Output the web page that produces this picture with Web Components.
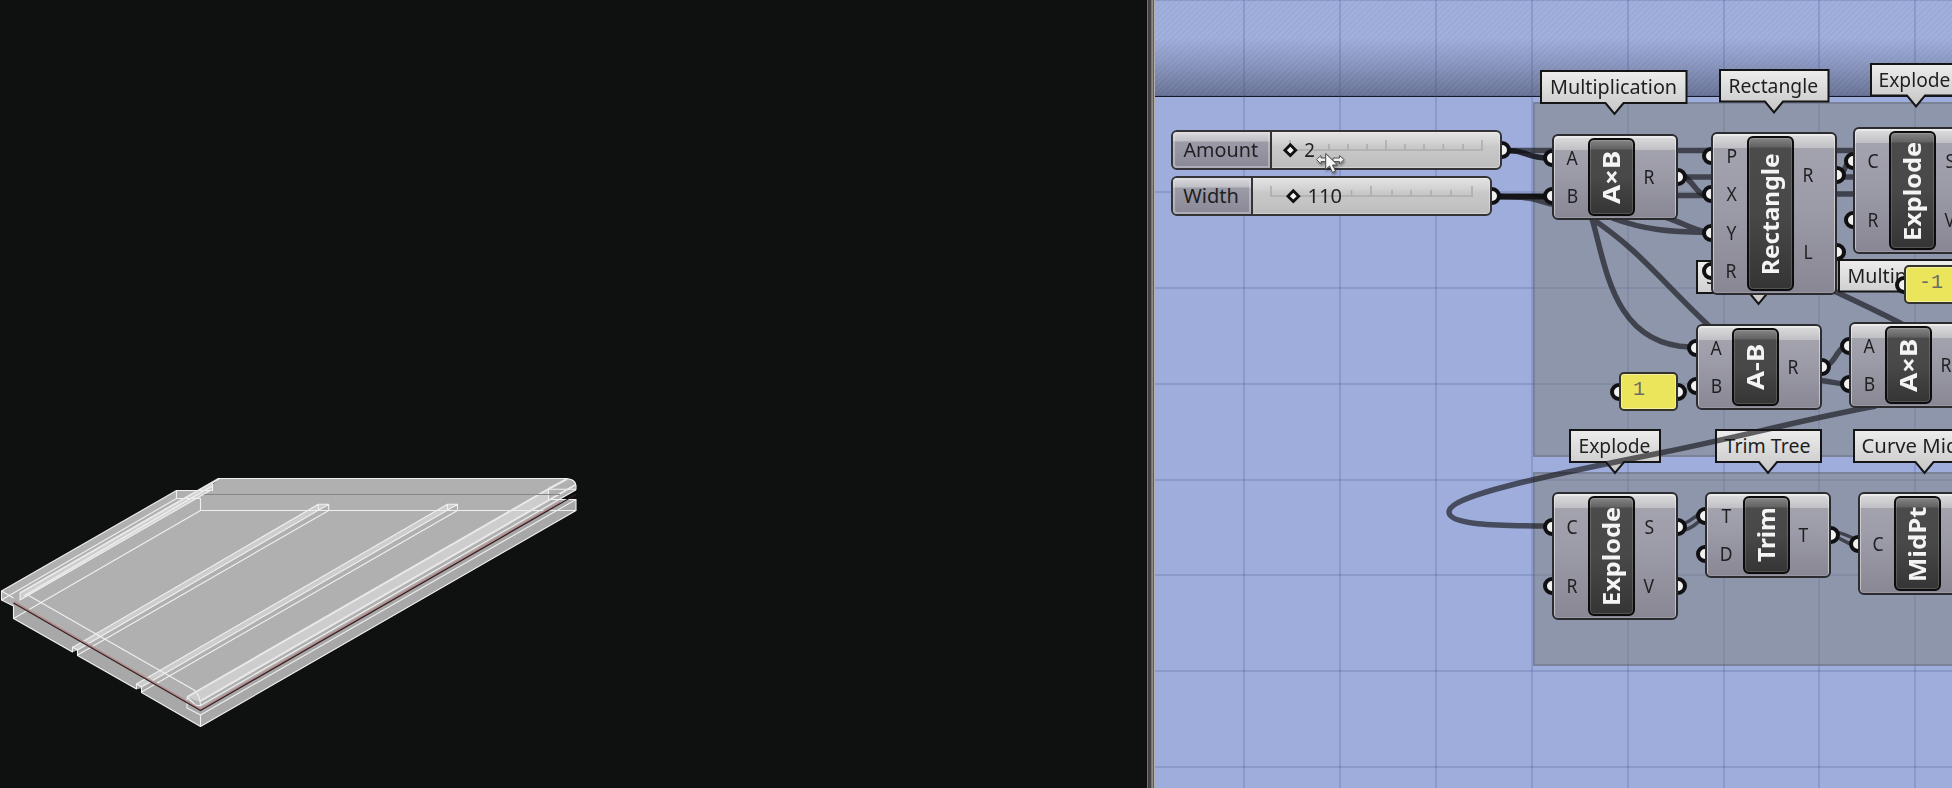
<!DOCTYPE html>
<html lang="en">
<head>
<meta charset="utf-8">
<title>Definition editor</title>
<style>
html,body{margin:0;height:100%;overflow:hidden;background:#0f1110}
body{font-family:"Noto Sans","Open Sans",sans-serif;color:#1f1f22}
</style>
</head>
<body>
<split-workspace></split-workspace>
<script>
const define=(name,html,init)=>customElements.define(name,class extends HTMLElement{
  connectedCallback(){
    if(this.shadowRoot)return;
    const root=this.attachShadow({mode:'open'});
    root.innerHTML=typeof html==='function'?html(this):html;
    if(init)init(this,root);
  }
});
const num=(el,a)=>parseFloat(el.getAttribute(a));

/* A run of text squeezed or stretched to a given width */
define('fit-text',`<style>:host{display:inline-flex;justify-content:center;white-space:nowrap;line-height:1}
span{flex:none;display:block;transform-origin:50% 50%}</style><span><slot></slot></span>`,(el,root)=>{
  const w=num(el,'w'),s=root.querySelector('span');
  el.style.width=w+'px';
  const n=s.offsetWidth;
  if(n)s.style.transform=`scaleX(${w/n})`;
});

/* Half-hidden connector */
define('wire-grip',`<style>:host{display:block;box-sizing:border-box;width:18px;height:18px;border:4px solid #101012;border-radius:50%;background:#f0f0f1}</style>`);

/* Component with inputs, title plate and outputs */
define('graph-node',el=>{
  const list=(a)=>(el.getAttribute(a)||'').split(',').filter(Boolean);
  const col=(side,names)=>`<div class="${side}">${names.map(n=>`<div class="port"><span>${n}</span></div>`).join('')}</div>`;
  const grips=(side,names)=>`<div class="grips ${side}g">${names.map(()=>`<div class="port"><wire-grip></wire-grip></div>`).join('')}</div>`;
  return `<style>
  :host{position:absolute;display:block}
  .body{position:absolute;inset:0;box-sizing:border-box;border:2px solid #2c2c30;border-radius:6px;
    display:grid;grid-template-columns:${el.getAttribute('pad')||34}px 47px 1fr;
    background:linear-gradient(#dedee0 0,#c0c0c4 14px,#a3a3ae 14.5px,#9c9ba8 45%,#898794 100%);
    box-shadow:inset 0 1px 0 1px rgba(255,255,255,.38),inset 0 0 0 1px rgba(255,255,255,.13)}
  .in,.out,.grips{display:flex;flex-direction:column;padding:3px 0}
  .in{padding-left:3px}.out{padding-right:13px}
  .port{flex:1;display:flex;align-items:center;justify-content:center;min-height:0}
  .port span{font-size:19.5px;line-height:20px;transform:scaleX(.9)}
  .plate{margin:2px 0;box-sizing:border-box;border:2px solid #0c0c0d;border-radius:6px;display:flex;align-items:center;justify-content:center;
    background:linear-gradient(#858585 0,#626262 9px,#4b4b4b 10px,#484848 50%,#353535);box-shadow:inset 0 0 0 1px rgba(255,255,255,.15);
    color:#f4f4f4;font-weight:700;font-size:24px;min-width:0;min-height:0;overflow:hidden}
  .plate fit-text{flex:none;transform:translateX(-1px) rotate(-90deg)}
  .grips{position:absolute;top:2px;bottom:2px;width:18px}
  .ing{left:-9px}.outg{right:-9px}
  </style>${grips('in',list('in'))}${grips('out',list('out'))}
  <div class="body">${col('in',list('in'))}<div class="plate"><fit-text w="${el.getAttribute('tw')}">${el.getAttribute('name')}</fit-text></div>${col('out',list('out'))}</div>`;
},place);

function place(el){
  el.style.left=Math.floor(num(el,'x'))-1155+'px';el.style.top=Math.floor(num(el,'y'))+'px';
  el.style.width=num(el,'w')+'px';el.style.height=num(el,'h')+'px';
}

/* Name balloon with pointer */
define('name-tag',el=>{
  const w=num(el,'w'),h=num(el,'h'),t=num(el,'tip');
  return `<style>:host{position:absolute;display:flex;align-items:center}
  svg{position:absolute;left:0;top:0;overflow:visible}
  fit-text{position:relative;margin-left:${num(el,'inset')}px;font-size:19.5px}</style>
  <svg width="${w}" height="${h+12}"><defs><linearGradient id="g" x2="0" y2="1"><stop stop-color="#ededed"/><stop offset="1" stop-color="#c5c5c5"/></linearGradient></defs>
  <path d="M1 1H${w-1}V${h-1}H${t+9}L${t} ${h+10}L${t-9} ${h-1}H1Z" fill="url(#g)" stroke="#151515" stroke-width="2"/></svg>
  <fit-text w="${el.getAttribute('tw')}"><slot></slot></fit-text>`;
},place);

/* Yellow text panel */
define('value-panel',el=>`<style>:host{position:absolute;display:block}
  .b{position:absolute;inset:0;box-sizing:border-box;border:2px solid #33332a;border-radius:5px;background:#ebe55c;box-shadow:inset 0 0 0 1px #f3efa0;
  display:flex;align-items:center;padding:0 0 5px ${el.getAttribute('inset')}px;font:20px "Liberation Mono",monospace;color:#6b6c62}
  wire-grip{position:absolute;top:calc(50% - 9px)}.l{left:-9px}.r{right:-9px}</style>
  <wire-grip class="l"></wire-grip><wire-grip class="r"></wire-grip><div class="b"><slot></slot></div>`,place);

/* Number slider */
define('number-slider',el=>{
  const x=num(el,'x'),div=num(el,'div')-x,w=num(el,'w');
  const ticks=el.getAttribute('ticks').split(',').map(t=>{const big=t.endsWith('!'),p=parseFloat(t)-x;return `M${p} 20V${big?10:14}`}).join('');
  const k=num(el,'knob')-x,[a,b]=el.getAttribute('rail').split(',').map(v=>v-x);
  return `<style>:host{position:absolute;display:block}
  wire-grip{position:absolute;right:-9px;top:calc(50% - 9px)}
  .b{position:absolute;inset:0;box-sizing:border-box;border:2px solid #343437;border-radius:6px;overflow:hidden;display:flex;
  background:linear-gradient(#e3e3e3,#d2d2d2 30%,#c9c9c9 40%,#bdbdbd);box-shadow:inset 0 0 0 1px rgba(255,255,255,.3)}
  .tag{box-sizing:border-box;width:${div-1}px;flex:none;border-right:2px solid #343437;display:flex;align-items:center;justify-content:center;font-size:20px;
  background:linear-gradient(#d9d9dd 0,#bfbfc6 9px,#9c9ba8 10px,#8a8896);box-shadow:inset 0 0 0 2px rgba(230,230,235,.4);border-radius:4px 0 0 4px}
  .tag fit-text{transform:translateX(-1px)}
  svg{position:absolute;left:0;top:0}
  .v{position:absolute;left:${num(el,'vx')-x}px;top:50%;font-size:19.5px;line-height:20px;margin-top:-10px}
  </style><wire-grip></wire-grip><div class="b"><div class="tag"><fit-text w="${el.getAttribute('tw')}">${el.getAttribute('name')}</fit-text></div></div>
  <svg width="${w}" height="40"><path d="M${a} 20H${b}${ticks}" stroke="#adadad" stroke-width="1.600" fill="none"/>
  <path d="M${k} 14.800L${k+5.4} 20.200L${k} 25.600L${k-5.4} 20.200Z" fill="#f5f5f5" stroke="#101010" stroke-width="2.800"/></svg>
  <fit-text class="v" w="${el.getAttribute('vw')}"><slot></slot></fit-text>`;
},place);

/* Shaded model view */
define('model-view',`<style>:host{display:block;background:#0f1110;overflow:hidden}svg{display:block}</style>
<svg width="1147" height="788" fill="none" stroke-linejoin="round">
<path fill="#b0b0b0" d="M1.5 591L176.5 490.5H204L213 484L219 478.5H567Q576 480 576 486V490L560 499.5H576V510.5L200.5 726.5L142 692.5V688L136.500 689L78 655.500V650L72.500 652L13.5 618.500V606L1.5 600Z"/>
<path fill="#a8a8a8" d="M13.500 603L200.5 710.5L560 504L576 499.5V510.5L200.5 726.5L142 692.5V688L136.500 689L78 655.500V650L72.500 652L13.5 618.500Z"/>
<path fill="#cdcdcd" d="M20 593L212.500 482V490L20 600ZM72.500 648L318.300 504.300H328.700L77.500 650ZM136.500 684L447.500 504.300H457.500L141.500 687ZM187 697L548.500 489L567 479H576V484.500L200.500 702Z"/>
<path fill="#b0b0b0" d="M548.500 489.300L567 479Q576 480 576 486V490L560 499.5H548.500Z"/>
<path fill="#0f1110" d="M568 478H578V486.500L576.500 486Q576 479.500 568 478Z"/>
<path fill="#0f1110" d="M577 490L560.500 499H577Z"/>
<g stroke="#f0f0f0" stroke-width="1.100">
<path d="M176.500 490.500L1.500 591V600L13.500 606V618.500L72.500 652V647L77.500 650V655.500L136.500 689V684L141.500 687V692.500L200.500 726.500L576 510.500V499.500H548.500V489.300H576V486Q576 480 567 478.500H219L212.500 483V490.500H176.500V498.500H200.500V510.500H576"/>
<path d="M1.500 600L176.500 498.500M13.500 618.500L200.500 510.500M1.5 591L13.5 598M20 593V600L210 490.500M26 594L194 690Q200 695 200.500 705M72.500 647.500L318.300 504.300H328.700V510.500L77.500 655M77.500 650L328.700 504.300M318.300 504.300V510.500M136.500 684L447.500 504.300H457.500V510.500L141.500 692M141.500 687L457.500 504.300M447.500 504.300V510.500M187 698V708L200.500 715V726.500M200.500 715L576 499.500M187 697L196 705.500H200.500L576 489.700"/>
</g>
<path d="M20 593L219 478.500M24 596L212 486M187 697L548.500 489L567 479M200.500 701L576 484.500" stroke="#e9e9e9" stroke-width="2"/>
<path d="M204 494.500H560" stroke="#858585"/>
<path d="M14 602L200.500 709.500L560 502.500" stroke="#b39090" stroke-width="2.500"/>
<path d="M13.500 603L200.500 710.500L576 494.500" stroke="#352124" stroke-width="1.300"/>
</svg>`);

/* Canvas wires, in page coordinates */
define('wire-layer',`<style>:host{position:absolute;inset:0;display:block}svg{display:block}</style>
<svg width="797" height="788" viewBox="1155 0 797 788" fill="none" stroke="rgba(24,24,28,.66)" stroke-width="5.500">
<path d="M1508 150.500H1860"/><path d="M1508 150.500C1527 150.500 1527 158 1548 158" stroke="rgba(15,15,18,.85)"/>
<path d="M1498 196.500H1548" stroke="#101012" stroke-width="6"/>
<path d="M1500 196.500C1540 197 1535 201 1556 205"/>
<path d="M1684 177H1860M1676 195.500H1712M1830 194H1860"/>
<path d="M1680 175C1693 178 1695 195 1708 195.500M1612 218C1645 230 1670 232 1706 232.500M1664 217C1680 221 1690 229 1706 232"/>
<path d="M1591 215C1606 265 1612 344 1690 347M1588 216C1640 250 1660 280 1709 326M1834 291C1860 303 1875 310 1902 324"/>
<path d="M1838 177C1846 173 1844 163 1852 159M1822 366.500C1836 366 1836 346 1849 345.500M1820 380.500C1830 381 1834 383.500 1846 384"/>
<path d="M1876 406C1800 420 1740 437 1660 453C1540 477 1449 496 1449 512C1449 526 1505 525.500 1546 526"/>
<path d="M1682 524C1692 522 1695 514 1704 513M1684 530C1697 527 1698 519 1706 518M1835 532C1845 533 1850 538 1859 540M1835 537C1845 539 1848 546 1859 546" stroke-width="3.500"/>
</svg>`);

define('pointer-cursor',`<style>:host{position:absolute;left:160px;top:151px;display:block}svg{display:block;filter:drop-shadow(1px 2px 1px rgba(0,0,0,.35))}</style>
<svg width="32" height="26" viewBox="0 0 32 26" fill="#eee" stroke="#555" stroke-width="1"><path d="M1.500 8.500L6 4.500V7H12V10.500H6V13ZM29 8.500L24.500 4.500V7H18V10.500H24.500V13Z"/>
<path d="M10.700 2.500V18.500L14.500 15L17.500 21.500L20.500 20L17.500 14H22.500Z" fill="#f5f5f5" stroke="#444"/></svg>`);

define('graph-canvas',`<style>
:host{display:block;position:relative;overflow:hidden;background:#9eaddb}
.band{box-sizing:border-box;height:97px;border-bottom:1px solid #0c0c10;
background:repeating-linear-gradient(135deg,rgba(255,255,255,.03) 0 2px,rgba(0,0,30,.015) 2px 4px),linear-gradient(transparent 38px,rgba(60,65,90,.22) 64px,rgba(55,60,85,.52) 96px)}
.group{position:absolute;left:378px;right:-4px;box-sizing:border-box;background:rgba(126,128,126,.5);border:2px solid rgba(90,96,120,.38)}
.grid{position:absolute;inset:-1px 0 0;background:repeating-linear-gradient(90deg,transparent 0 88px,rgba(55,75,135,.2) 88px 90px,transparent 90px 95.900px),repeating-linear-gradient(rgba(55,75,135,.2) 0 2px,transparent 2px 95.900px)}
</style>
<div class="band"></div><div class="grid"></div>
<div class="group" style="top:102px;height:355px"></div><div class="group" style="top:472px;height:194px"></div>
<name-tag x="1540.500" y="70.500" w="147.500" h="34" tip="74.500" inset="10" tw="127">Multiplication</name-tag>
<name-tag x="1719" y="69" w="110.500" h="33.500" tip="55" inset="9.500" tw="90">Rectangle</name-tag>
<name-tag x="1870" y="63" w="92" h="33.500" tip="46" inset="8" tw="72">Explode</name-tag>
<name-tag x="1696" y="260.500" w="124" h="34" tip="62.500" inset="10" tw="102">Subtraction</name-tag>
<name-tag x="1838" y="259" w="147" h="33.500" tip="74" inset="9.500" tw="126">Multiplication</name-tag>
<name-tag x="1569" y="429" w="92" h="34" tip="46" inset="9" tw="72">Explode</name-tag>
<name-tag x="1715" y="429" w="107" h="34" tip="53" inset="9.500" tw="86">Trim Tree</name-tag>
<name-tag x="1853" y="429" w="146" h="34" tip="71.500" inset="9" tw="126">Curve Middle</name-tag>
<wire-layer></wire-layer>
<number-slider x="1171" y="130" w="331" h="40" div="1271" name="Amount" tw="75" knob="1290.300" rail="1290,1483" vx="1304.500" vw="10.500" ticks="1290!,1329,1348,1367,1386!,1405,1424,1443.300,1463,1482!">2</number-slider>
<number-slider x="1171" y="176" w="321" h="40" div="1252" name="Width" tw="56" knob="1293.300" rail="1270,1473" vx="1308" vw="34" ticks="1271!,1351.500,1371!,1392,1411,1431,1451,1472!">110</number-slider>
<graph-node x="1552" y="134" w="126" h="85.500" in="A,B" out="R" name="A×B" tw="53"></graph-node>
<graph-node x="1711" y="132" w="126" h="163" in="P,X,Y,R" out="R,L" name="Rectangle" tw="122"></graph-node>
<graph-node x="1853" y="127" w="126" h="127" in="C,R" out="S,V" name="Explode" tw="99"></graph-node>
<graph-node x="1696" y="324" w="126" h="85.500" in="A,B" out="R" name="A-B" tw="46"></graph-node>
<graph-node x="1849" y="322" w="126" h="85.500" in="A,B" out="R" name="A×B" tw="53"></graph-node>
<graph-node x="1552" y="492" w="126" h="128" in="C,R" out="S,V" name="Explode" tw="99"></graph-node>
<graph-node x="1705" y="492" w="126" h="86" in="T,D" out="T" name="Trim" tw="55" pad="36"></graph-node>
<graph-node x="1858" y="492" w="126" h="103" in="C" out="" name="MidPt" tw="75"></graph-node>
<value-panel x="1619" y="372" w="59" h="39" inset="12">1</value-panel>
<value-panel x="1904" y="265" w="80" h="39" inset="13">-1</value-panel>
<pointer-cursor></pointer-cursor>`);

define('split-workspace',`<style>
:host{display:grid;grid-template-columns:1147px 8px 1fr;height:788px}
.bar{background:linear-gradient(90deg,#747272 0 1px,#464243 1px 4px,#77777a 4px 5px,#8b8b8c 5px 6px,#5d5b5c 6px 7px,#b7aea5 7px)}
</style><model-view></model-view><div class="bar"></div><graph-canvas></graph-canvas>`);
</script>
</body>
</html>
